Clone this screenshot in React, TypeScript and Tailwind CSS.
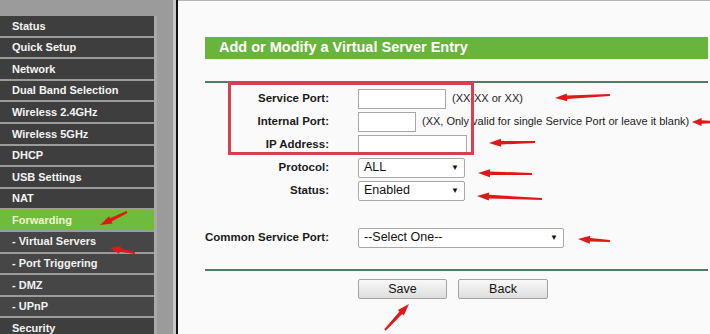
import React from "react";

type Item = { t: string; sub?: boolean; active?: boolean; sel?: boolean };

const menu: Item[] = [
  { t: "Status" },
  { t: "Quick Setup" },
  { t: "Network" },
  { t: "Dual Band Selection" },
  { t: "Wireless 2.4GHz" },
  { t: "Wireless 5GHz" },
  { t: "DHCP" },
  { t: "USB Settings" },
  { t: "NAT" },
  { t: "Forwarding", active: true },
  { t: "- Virtual Servers", sub: true, sel: true },
  { t: "- Port Triggering", sub: true },
  { t: "- DMZ", sub: true },
  { t: "- UPnP", sub: true },
  { t: "Security" },
];

const arrows: [number, number, number, number][] = [
  [610, 95, 555, 98],
  [716, 122, 692, 122],
  [535, 142, 489, 143],
  [532, 174, 478, 173],
  [542, 199, 477, 196],
  [610, 241, 578, 239],
  [127, 212, 100, 225],
  [135, 253, 110, 248],
  [385, 330, 409, 304],
];

function arrowPoly(x1: number, y1: number, x2: number, y2: number) {
  const dx = x2 - x1;
  const dy = y2 - y1;
  const len = Math.hypot(dx, dy);
  const ux = dx / len;
  const uy = dy / len;
  const nx = -uy;
  const ny = ux;
  const head = Math.min(12, len * 0.4);
  const bx = x2 - ux * head;
  const by = y2 - uy * head;
  const hw = 4;
  const sw = 1.8;
  const tw = 1.0;
  const pts = [
    [x1 + nx * tw, y1 + ny * tw],
    [bx + nx * sw, by + ny * sw],
    [bx + nx * hw, by + ny * hw],
    [x2, y2],
    [bx - nx * hw, by - ny * hw],
    [bx - nx * sw, by - ny * sw],
    [x1 - nx * tw, y1 - ny * tw],
  ];
  return pts.map((p) => p[0].toFixed(1) + "," + p[1].toFixed(1)).join(" ");
}

function Select({ value, w }: { value: string; w: string }) {
  return (
    <div
      className={`${w} h-[20px] bg-white border border-[#a8a8a8] rounded-[2px] flex items-center justify-between pl-[5px] pr-[5px] text-[12.5px] text-[#111]`}
    >
      <span>{value}</span>
      <span className="text-[8px] leading-none text-[#111]">▼</span>
    </div>
  );
}

function Row({ label, children }: { label: string; children: React.ReactNode }) {
  return (
    <div className="flex items-center h-[23px]">
      <div className="w-[124px] text-right font-bold text-[11.5px] text-[#1a1a1a]">{label}</div>
      <div className="ml-[29px] flex items-center">{children}</div>
    </div>
  );
}

export default function App() {
  return (
    <div
      className="relative w-[710px] h-[334px] overflow-hidden flex bg-[#fbfafb]"
      style={{ fontFamily: '"Liberation Sans", Arial, sans-serif' }}
    >
      {/* Sidebar */}
      <aside className="w-[173px] h-full bg-[#9b9b9b] pt-[16px] flex">
        <div className="w-[154px] flex flex-col">
          {menu.map((m) => (
            <div
              key={m.t}
              className={`h-[19.6px] mb-[2px] shrink-0 flex items-center pl-[12px] font-bold text-[11px] ${
                m.active
                  ? "bg-[#6fbb3c] text-[#eef6d6] w-[156px]"
                  : m.sub
                  ? "bg-[#464646] text-[#f2f2f2]"
                  : "bg-[#3e3e3e] text-[#f4f4f4]"
              } ${m.sel ? "text-[#c3d44a]" : ""}`}
            >
              {m.t}
            </div>
          ))}
        </div>
        <div className="w-[3px] h-full bg-[#a9a9a9]" />
      </aside>
      <div className="w-[3px] h-full bg-[#c7c7c7]" />
      <div className="w-[2px] h-full bg-[#111]" />

      {/* Main */}
      <main className="flex-1 h-full border-t border-[#b5b5b5] pl-[27px] pr-[2px]">
        <div className="mt-[36px] h-[22px] bg-[#68b43c] flex items-center pl-[14px] text-white font-bold text-[14.5px]">
          Add or Modify a Virtual Server Entry
        </div>
        <div className="mt-[22px] h-[2px] bg-[#4f7d62]" />
        <div className="mt-[4px] flex flex-col">
          <Row label="Service Port:">
            <div className="w-[88px] h-[20px] bg-white border border-[#a8a8a8]" />
            <span className="ml-[6px] text-[11px] text-[#222]">(XX-XX or XX)</span>
          </Row>
          <Row label="Internal Port:">
            <div className="w-[58px] h-[20px] bg-white border border-[#a8a8a8]" />
            <span className="ml-[6px] text-[11px] text-[#222] whitespace-nowrap">
              (XX, Only valid for single Service Port or leave it blank)
            </span>
          </Row>
          <Row label="IP Address:">
            <div className="w-[109px] h-[20px] bg-white border border-[#a8a8a8]" />
          </Row>
          <Row label="Protocol:">
            <Select value="ALL" w="w-[107px]" />
          </Row>
          <Row label="Status:">
            <Select value="Enabled" w="w-[107px]" />
          </Row>
        </div>
        <div className="mt-[24px]">
          <Row label="Common Service Port:">
            <Select value="--Select One--" w="w-[206px]" />
          </Row>
        </div>
        <div className="mt-[20px] h-[1.5px] bg-[#4f7d62]" />
        <div className="mt-[8px] flex pl-[153px] gap-[11px]">
          <button className="w-[89px] h-[20px] rounded-[2px] border border-[#a3a3a3] bg-gradient-to-b from-[#f8f8f8] to-[#dedede] text-[12.5px] text-[#111]">
            Save
          </button>
          <button className="w-[90px] h-[20px] rounded-[2px] border border-[#a3a3a3] bg-gradient-to-b from-[#f8f8f8] to-[#dedede] text-[12.5px] text-[#111]">
            Back
          </button>
        </div>
      </main>

      {/* Annotation: red rectangle */}
      <div className="absolute left-[228px] top-[82px] w-[246px] h-[73px] border-[3px] border-[#d8404d] pointer-events-none" />

      {/* Annotation: arrows */}
      <svg className="absolute inset-0 pointer-events-none" width={710} height={334} viewBox="0 0 710 334">
        {arrows.map((a, i) => (
          <polygon key={i} points={arrowPoly(a[0], a[1], a[2], a[3])} fill="#e01818" />
        ))}
      </svg>
    </div>
  );
}
